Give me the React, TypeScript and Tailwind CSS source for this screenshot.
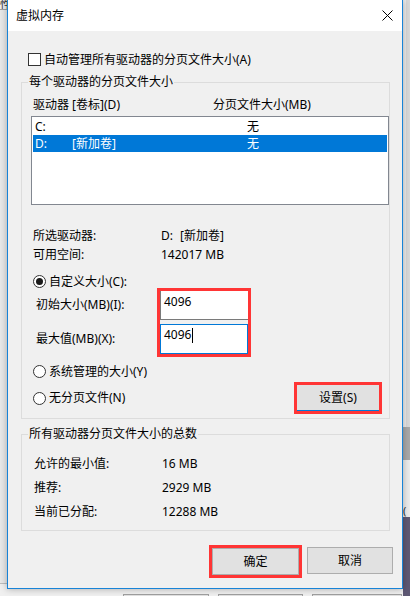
import React from "react";

const GroupBox: React.FC<{ title: string; className?: string; children: React.ReactNode }> = ({
    title,
    className,
    children,
}) => (
    <div className={`ml-[13px] w-[369px] border border-[#dcdcdc] flex flex-col ${className ?? ""}`}>
        <span className="-mt-[9px] ml-[6px] self-start bg-[#f0f0f0] px-[1px] leading-[16px]">{title}</span>
        {children}
    </div>
);

const Radio: React.FC<{ checked?: boolean }> = ({ checked }) => (
    <span className="w-[13px] h-[13px] shrink-0 rounded-full border border-[#333333] bg-white flex items-center justify-center">
        {checked && <span className="w-[7px] h-[7px] rounded-full bg-[#1a1a1a]" />}
    </span>
);

const RadioRow: React.FC<{ label: string; checked?: boolean; className?: string }> = ({
    label,
    checked,
    className,
}) => (
    <div className={`ml-[11px] h-[13px] flex items-center gap-[3px] ${className ?? ""}`}>
        <Radio checked={checked} />
        <span className="leading-[16px] whitespace-nowrap">{label}</span>
    </div>
);

const InfoRow: React.FC<{ label: string; children: React.ReactNode }> = ({ label, children }) => (
    <div className="flex leading-[16px]">
        <span className="w-[128px]">{label}</span>
        <span className="flex">{children}</span>
    </div>
);

const CloseIcon = () => (
    <svg width="11" height="11" viewBox="0 0 11 11">
        <path d="M0.5 0.5 L10.5 10.5 M10.5 0.5 L0.5 10.5" stroke="#000" strokeWidth="1" fill="none" />
    </svg>
);

export default function App() {
    return (
        <div className="w-[410px] h-[596px] overflow-hidden flex bg-[#f0f0f0] text-[12px] text-black font-['Noto_Sans','Noto_Sans_CJK_SC',sans-serif]">
            {/* background, left */}
            <div className="w-[7px] h-[596px] flex flex-col shrink-0 bg-[#f0f0f0]">
                <div className="h-[9px] overflow-hidden leading-[10px] text-[11px] text-[#333333]">性</div>
                <div className="h-[1px] bg-[#a0a0a0]" />
                <div className="flex-1 bg-[#e9e9e9]" />
                <div className="h-[1px] bg-[#bdbdbd]" />
                <div className="h-[12px] bg-[#f0f0f0]" />
            </div>

            <div className="w-[396px] h-[596px] flex flex-col shrink-0">
                {/* dialog */}
                <div className="relative z-10 w-[396px] h-[589px] border-x border-b border-[#1883d7] flex flex-col shadow-[0_0_7px_rgba(0,0,0,0.3)]">
                    <div className="h-[31px] bg-white flex items-center justify-between pl-[8px] pr-[9px]">
                        <span className="leading-[16px]">虚拟内存</span>
                        <CloseIcon />
                    </div>

                    <div className="flex-1 bg-[#f0f0f0] flex flex-col">
                        <div className="mt-[22px] ml-[20px] h-[13px] flex items-center gap-[3px]">
                            <span className="w-[13px] h-[13px] shrink-0 border border-[#333333] bg-white" />
                            <span className="leading-[16px]">自动管理所有驱动器的分页文件大小(A)</span>
                        </div>

                        <GroupBox title="每个驱动器的分页文件大小" className="mt-[16px] pb-[4px]">
                            <div className="mt-[7px] pl-[11px] flex leading-[16px]">
                                <span className="w-[180px]">驱动器 [卷标](D)</span>
                                <span>分页文件大小(MB)</span>
                            </div>

                            <div className="mt-[3px] ml-[9px] w-[358px] h-[89px] border border-[#828790] bg-white p-[1px] flex flex-col">
                                <div className="h-[17px] flex items-center pl-[2px] leading-[16px]">
                                    <span className="w-[37px]">C:</span>
                                    <span className="w-[175px]"></span>
                                    <span>无</span>
                                </div>
                                <div className="h-[17px] flex items-center pl-[2px] leading-[16px] bg-[#0078d7] text-white">
                                    <span className="w-[37px]">D:</span>
                                    <span className="w-[175px]">[新加卷]</span>
                                    <span>无</span>
                                </div>
                            </div>

                            <div className="mt-[23px] pl-[11px] flex flex-col gap-[3px]">
                                <InfoRow label="所选驱动器:">
                                    <span className="w-[19px]">D:</span>
                                    <span>[新加卷]</span>
                                </InfoRow>
                                <InfoRow label="可用空间:">142017 MB</InfoRow>
                            </div>

                            <RadioRow label="自定义大小(C):" checked className="mt-[12px]" />

                            <div className="flex">
                                <div className="w-[135px] pl-[14px] pt-[9px] flex flex-col gap-[18px] leading-[16px]">
                                    <span>初始大小(MB)(I):</span>
                                    <span>最大值(MB)(X):</span>
                                </div>
                                <div className="w-[94px] h-[69px] border-[3px] border-[#ff3535] flex flex-col">
                                    <div className="h-[29px] border-l border-b border-[#7a7a7a] bg-white pl-[3px] pt-[3px] leading-[16px]">
                                        4096
                                    </div>
                                    <div className="mt-[4px] flex-1 border border-[#0078d7] bg-white pl-[3px] pt-[2px] leading-[16px] flex items-start">
                                        <span>4096</span>
                                        <span className="ml-[1px] mt-[1px] w-[1px] h-[15px] bg-black" />
                                    </div>
                                </div>
                            </div>

                            <RadioRow label="系统管理的大小(Y)" className="mt-[8px]" />

                            <div className="mt-[4px] flex items-center">
                                <RadioRow label="无分页文件(N)" />
                                <div className="ml-auto mr-[7px] w-[88px] h-[32px] border-[3px] border-[#ff3535] flex">
                                    <div className="flex-1 bg-[#e1e1e1] border-b border-[#0078d7] flex items-center justify-center leading-[16px]">
                                        设置(S)
                                    </div>
                                </div>
                            </div>
                        </GroupBox>

                        <GroupBox title="所有驱动器分页文件大小的总数" className="mt-[15px] pb-[10px]">
                            <div className="mt-[14px] pl-[12px] flex flex-col gap-[8px]">
                                <InfoRow label="允许的最小值:">16 MB</InfoRow>
                                <InfoRow label="推荐:">2929 MB</InfoRow>
                                <InfoRow label="当前已分配:">12288 MB</InfoRow>
                            </div>
                        </GroupBox>

                        <div className="mt-[14px] pr-[9px] flex justify-end items-start gap-[5px]">
                            <div className="w-[93px] h-[33px] border-[3px] border-[#ff3535] flex">
                                <div className="flex-1 bg-[#e1e1e1] border border-[#adadad] flex items-center justify-center leading-[16px]">
                                    确定
                                </div>
                            </div>
                            <div className="mt-[2px] w-[86px] h-[27px] bg-[#e1e1e1] border border-[#adadad] flex items-center justify-center leading-[16px]">
                                取消
                            </div>
                        </div>
                    </div>
                </div>

                {/* background, below the dialog */}
                <div className="h-[7px] flex gap-[9px] pl-[116px] pt-[5px] bg-[#f0f0f0]">
                    <div className="w-[86px] border-t border-x border-[#a0a0a0] bg-[#e1e1e1]" />
                    <div className="w-[85px] border-t border-x border-[#a0a0a0] bg-[#e1e1e1]" />
                    <div className="w-[90px] border-t border-x border-[#a0a0a0] bg-[#e1e1e1]" />
                </div>
            </div>

            {/* background, right */}
            <div className="w-[7px] h-[596px] flex flex-col shrink-0">
                <div className="h-[427px] bg-[#d9d9d9] border-l-[3px] border-[#ececec]" />
                <div className="h-[33px] bg-[#a9a9a9]" />
                <div className="h-[45px] bg-[#ececec]" />
                <div className="h-[12px] bg-[#ececec] overflow-hidden leading-[12px] text-[11px] text-[#333333]">(</div>
                <div className="flex-1 bg-[#5e5874]" />
            </div>
        </div>
    );
}
